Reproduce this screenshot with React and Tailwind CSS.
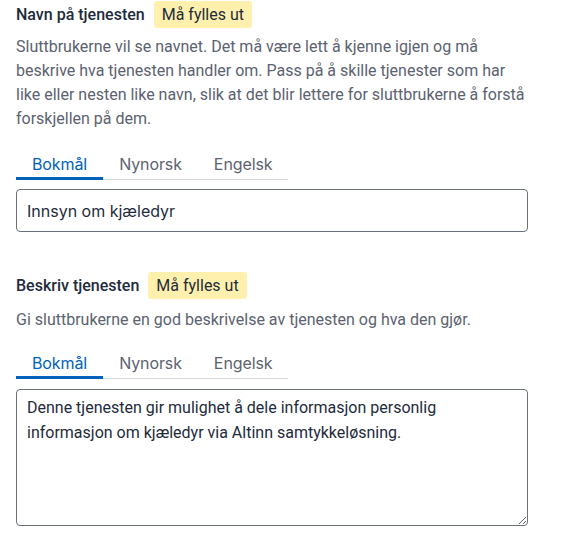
import React from "react";

function Tabs() {
  const tabs = ["Bokmål", "Nynorsk", "Engelsk"];
  return (
    <div className="inline-flex border-b border-[#d4d7dc]">
      {tabs.map((t, i) => (
        <div
          key={t}
          className={
            "px-4 pt-[11px] pb-[1px] text-[16px] leading-[24px] font-['Inter',sans-serif] tracking-[-0.1px] border-b-[3px] -mb-px " +
            (i === 0 ? "border-[#0062ba] text-[#0062ba]" : "border-transparent text-[#5b6270]")
          }
        >
          {t}
        </div>
      ))}
    </div>
  );
}

function Heading({ children }) {
  return (
    <div className="flex items-center gap-[9px]">
      <span className="text-[16px] font-medium text-[#1e2b3c]">{children}</span>
      <span className="h-[27px] flex items-center px-2 rounded-[3px] bg-[#fff1ad] text-[16px] text-[#1e2b3c]">
        Må fylles ut
      </span>
    </div>
  );
}

export default function App() {
  return (
    <div className="w-[572px] h-[555px] bg-white pl-4 pt-px font-['Roboto',sans-serif]">
      <div className="w-[512px]">
        <Heading>Navn på tjenesten</Heading>
        <p className="mt-[7px] text-[16px] leading-[24px] text-[#5b6270]">
          Sluttbrukerne vil se navnet. Det må være lett å kjenne igjen og må beskrive hva tjenesten handler om. Pass på å skille tjenester som har like eller nesten like navn, slik at det blir lettere for sluttbrukerne å forstå forskjellen på dem.
        </p>
        <div className="mt-[10px]">
          <Tabs />
        </div>
        <div className="mt-[9px] h-[43px] border border-[#6a717d] rounded-[4px] flex items-center px-[10px] text-[16px] text-[#1e2b3c] font-['Inter',sans-serif]">
          Innsyn om kjæledyr
        </div>

        <div className="mt-[40px]">
          <Heading>Beskriv tjenesten</Heading>
        </div>
        <p className="mt-[9px] text-[16px] leading-[24px] text-[#5b6270]">
          Gi sluttbrukerne en god beskrivelse av tjenesten og hva den gjør.
        </p>
        <div className="mt-[8px]">
          <Tabs />
        </div>
        <textarea
          className="mt-[10px] block w-full h-[137px] border border-[#6a717d] rounded-[4px] px-[10px] py-[5px] text-[16px] leading-[25px] text-[#1e2b3c] font-['Roboto',sans-serif] outline-none"
          defaultValue="Denne tjenesten gir mulighet å dele informasjon personlig informasjon om kjæledyr via Altinn samtykkeløsning."
        />
      </div>
    </div>
  );
}
